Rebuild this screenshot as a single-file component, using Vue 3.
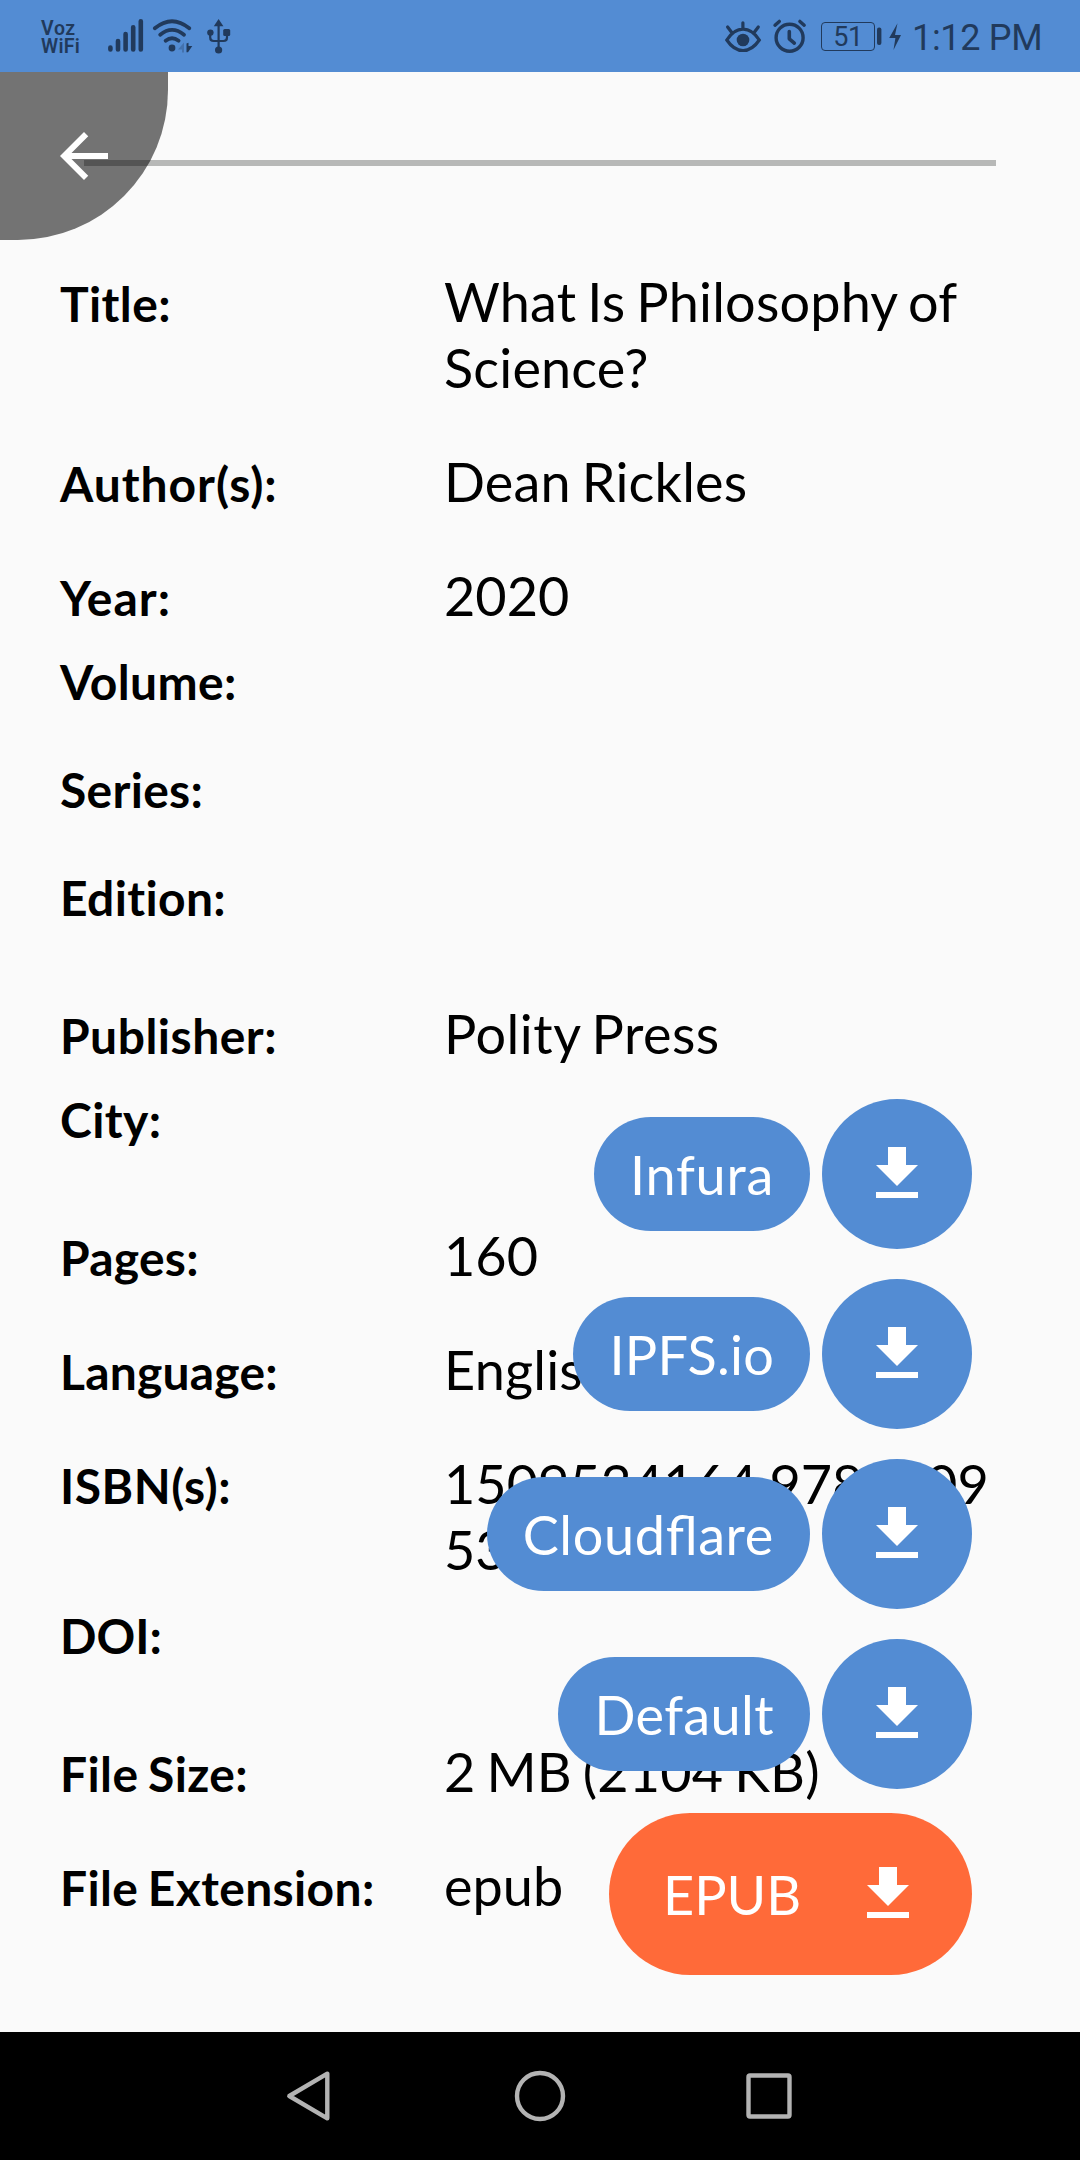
<script setup>
const details = [
  { label: 'Title:', labelTracking: 0.4, value: 'What Is Philosophy of Science?', tracking: 0.17 },
  { label: 'Author(s):', labelTracking: 0.95, value: 'Dean Rickles', tracking: 0.17 },
  { label: 'Year:', labelTracking: 1.05, value: '2020' },
  { label: 'Volume:', labelTracking: 0.35 },
  { label: 'Series:', labelTracking: 0.3 },
  { label: 'Edition:', labelTracking: 0.35 },
  { label: 'Publisher:', labelTracking: 0.5, value: 'Polity Press', tracking: 0.5 },
  { label: 'City:', labelTracking: 0.4 },
  { label: 'Pages:', labelTracking: 0.25, value: '160' },
  { label: 'Language:', labelTracking: 0.2, value: 'English', tracking: 0.2 },
  { label: 'ISBN(s):', labelTracking: 0.5, value: '1509534164,9781509534166', breakAll: true },
  { label: 'DOI:' },
  { label: 'File Size:', labelTracking: 0.4, value: '2 MB (2104 KB)', tracking: 0.15 },
  { label: 'File Extension:', labelTracking: 0.35, value: 'epub' },
]
const mirrors = [
  { name: 'Infura', tracking: 0.75 },
  { name: 'IPFS.io', tracking: 0.25 },
  { name: 'Cloudflare', tracking: 0.65 },
  { name: 'Default', tracking: 0.4 },
]
const spacing = (px) => (px ? { letterSpacing: `${px}px` } : null)
const downloadPath = 'M19 9h-4V3H9v6H5l7 7 7-7zM5 18v2h14v-2H5z'
</script>

<template>
  <div class="screen">
    <header class="status">
      <div class="carrier"><span>Voz</span><span>WiFi</span></div>
      <svg class="signal" width="38" height="72" viewBox="107 0 38 72" stroke-width="4.6" stroke-linecap="round">
        <path d="M110.4 47.5v2M118 41v8.5M125.6 34v15.5M133.2 27.3v22.2M140.8 21.3v28.2" />
      </svg>
      <svg class="wifi" width="42" height="72" viewBox="151 0 42 72" stroke-width="3.8" stroke-linecap="round">
        <path d="M154.8 28.3Q172 14.2 189.3 28.3M160.2 34.7Q172 25 184 34.7M165.6 40.7Q172 35.8 178.6 40.7" />
        <circle class="solid" cx="172" cy="48" r="3.4" />
        <path class="faint" d="M184 42.5v10h-2v-3h-4z" />
        <path class="solid" d="M186.5 43.5l2-.8v3.3h3.8l-4.3 6.2h-1.5z" />
      </svg>
      <svg class="usb" width="26" height="72" viewBox="206 0 26 72" stroke-width="2.2">
        <path d="M218.6 25v25M210.2 33v4.5q0 3.5 3.5 3.5h9.8q3.5 0 3.5-3.5V33" />
        <path class="solid" d="M218.6 19l4.8 7.2h-9.6z" />
        <circle class="solid" cx="218.6" cy="50" r="3.6" />
        <circle class="solid" cx="210.4" cy="32.6" r="3.2" />
        <rect class="solid" x="223.2" y="29" width="7" height="7" rx="1.5" />
      </svg>

      <svg class="eye" width="38" height="72" viewBox="724 0 38 72" stroke-width="3.2" stroke-linecap="round">
        <path d="M726.8 40C736 25.5 750 25.5 759.3 40 750 54 736 54 726.8 40zM742.9 22.8v6M727.6 27l3.8 5M758.3 27l-3.8 5" />
        <circle class="solid" cx="743" cy="40" r="6.3" />
      </svg>
      <svg class="alarm" width="36" height="72" viewBox="772 0 36 72" stroke-width="3.4" stroke-linecap="round">
        <circle cx="789.6" cy="37.7" r="13.5" />
        <path d="M789.3 31.5v7.3l5 4.3" stroke-width="3.6" stroke-linejoin="round" />
        <path d="M775 25.2l4.3-3.8M804.2 25.2l-4.3-3.8" />
      </svg>
      <div class="battery">51</div>
      <svg class="charge" width="26" height="72" viewBox="876 0 26 72">
        <rect class="solid" x="878" y="27.5" width="4.4" height="17.5" rx="2" />
        <path class="solid" d="M898.5 23.3l-8.3 14.7h6.2L894.5 50l7.5-15h-6z" />
      </svg>
      <time class="clock">1:12 PM</time>
    </header>

    <main class="page">
      <hr class="divider" />
      <section class="details">
        <div v-for="item in details" :key="item.label" class="row" :class="{ empty: !item.value }">
          <div class="label" :style="spacing(item.labelTracking)">{{ item.label }}</div>
          <div class="value" :class="{ unbroken: item.breakAll }" :style="spacing(item.tracking)">{{ item.value }}</div>
        </div>
      </section>

      <button class="back" aria-label="Back">
        <svg width="72" height="72" viewBox="0 0 24 24">
          <path d="M20 11H7.83l5.59-5.59L12 4l-8 8 8 8 1.41-1.41L7.83 13H20v-2z" />
        </svg>
      </button>

      <aside class="dial">
        <div v-for="mirror in mirrors" :key="mirror.name" class="mirror">
          <span class="pill" :style="spacing(mirror.tracking)">{{ mirror.name }}</span>
          <button class="round" :aria-label="mirror.name">
            <svg width="72" height="72" viewBox="0 0 24 24"><path :d="downloadPath" /></svg>
          </button>
        </div>
        <button class="main-action">
          <span>EPUB</span>
          <svg width="72" height="72" viewBox="0 0 24 24"><path :d="downloadPath" /></svg>
        </button>
      </aside>
    </main>

    <nav class="system-nav">
      <svg width="54" height="54" viewBox="0 0 54 54"><path d="M43.3 4.7v44.6L5.3 27z" stroke-linejoin="round" /></svg>
      <svg width="54" height="54" viewBox="0 0 54 54"><circle cx="27" cy="27" r="23" /></svg>
      <svg width="54" height="54" viewBox="0 0 54 54"><rect x="6.5" y="6.5" width="41" height="41" rx="1.5" /></svg>
    </nav>
  </div>
</template>

<style>
body {
  margin: 0;
  background: #fafafa;
}
</style>

<style scoped>
.screen {
  width: 1080px;
  height: 2160px;
  display: flex;
  flex-direction: column;
  overflow: hidden;
  background: #fafafa;
  color: #000;
  font-family: Lato, sans-serif;
}
button {
  border: 0;
  padding: 0;
  font: inherit;
  color: #fff;
}
svg {
  display: block;
  flex: none;
}

.status {
  box-sizing: border-box;
  height: 72px;
  flex: none;
  display: flex;
  align-items: center;
  padding: 0 36px 0 41px;
  background: #538cd3;
  color: #213a5c;
  font-family: Roboto, sans-serif;
  font-kerning: none;
}
.status svg {
  fill: none;
  stroke: #213a5c;
}
.status .solid {
  fill: #213a5c;
  stroke: none;
}
.status .faint {
  fill: #4472ae;
  stroke: none;
}
.carrier {
  width: 66px;
  display: flex;
  flex-direction: column;
  padding-top: 3px;
  font-size: 19.5px;
  line-height: 18px;
  font-weight: 600;
  letter-spacing: 0.3px;
}
.wifi {
  margin-left: 6px;
}
.usb {
  margin-left: 13px;
}
.eye {
  margin-left: auto;
}
.alarm {
  margin-left: 10px;
}
.battery {
  box-sizing: border-box;
  width: 54px;
  height: 29px;
  margin-left: 13.5px;
  border: 1.5px solid #213a5c;
  border-radius: 4px;
  font-size: 27px;
  line-height: 29px;
  text-align: center;
  letter-spacing: -0.5px;
}
.clock {
  width: 132px;
  margin-left: 11px;
  padding-top: 3px;
  font-size: 36px;
  line-height: 72px;
  letter-spacing: -0.3px;
  white-space: nowrap;
}

.page {
  position: relative;
  flex: 1;
}
.divider {
  height: 6px;
  margin: 88px 84px 0;
  border: 0;
  background: #b7b8b7;
}
.details {
  padding: 79px 60px 0;
}
.row {
  display: flex;
  align-items: baseline;
  padding: 24px 0;
}
.row.empty {
  height: 108px;
  padding: 0;
}
.label {
  width: 384px;
  flex: none;
  font-size: 48px;
  line-height: 58px;
  font-weight: 700;
  font-variant-ligatures: none;
  word-spacing: -2.5px;
}
.value {
  flex: 1;
  font-size: 54px;
  line-height: 66px;
  font-variant-ligatures: none;
  word-spacing: -3px;
}
.row.empty .value {
  display: none;
}
.unbroken {
  padding-right: 24px;
  word-break: break-all;
}

.back {
  position: absolute;
  top: 0;
  left: 0;
  width: 168px;
  height: 168px;
  display: flex;
  align-items: center;
  justify-content: center;
  border-radius: 0 0 150px 0;
  background: rgba(0, 0, 0, 0.54);
}
.back svg,
.dial svg {
  fill: #fff;
}

.dial {
  position: absolute;
  right: 108px;
  bottom: 57px;
  display: flex;
  flex-direction: column;
  align-items: flex-end;
  font-size: 54px;
  line-height: 66px;
  color: #fff;
}
.mirror {
  display: flex;
  align-items: center;
  gap: 12px;
  margin-bottom: 30px;
}
.mirror:nth-child(4) {
  margin-bottom: 24px;
}
.pill {
  padding: 25px 36px 23px;
  border-radius: 57px;
  background: #538cd3;
  font-feature-settings: 'liga' 1;
}
.round {
  width: 150px;
  height: 150px;
  display: flex;
  align-items: center;
  justify-content: center;
  border-radius: 50%;
  background: #538cd3;
}
.main-action {
  box-sizing: border-box;
  width: 363px;
  height: 162px;
  display: flex;
  align-items: center;
  justify-content: space-between;
  padding: 0 48px 0 54px;
  border-radius: 81px;
  background: #ff6a39;
}
.main-action span {
  padding-top: 2px;
}

.system-nav {
  height: 128px;
  flex: none;
  display: flex;
  align-items: center;
  justify-content: center;
  gap: 175px;
  background: #000;
}
.system-nav svg {
  fill: none;
  stroke: #b3b3b3;
  stroke-width: 4.4;
}
</style>
